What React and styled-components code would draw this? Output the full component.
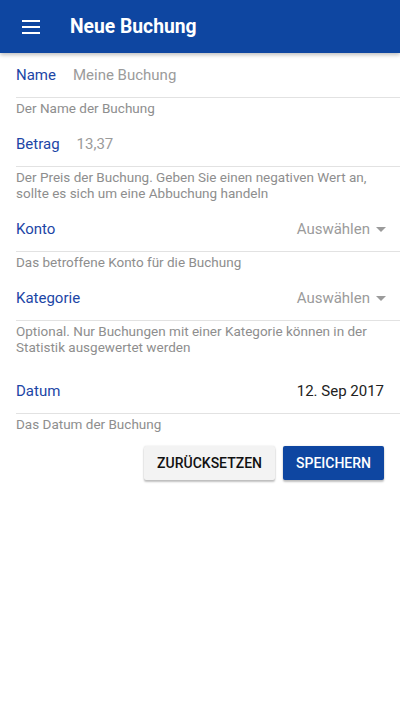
import styled, { createGlobalStyle } from 'styled-components';

const GlobalStyle = createGlobalStyle`
  body {
    margin: 0;
    background: #fff;
    font-family: Roboto, "Noto Sans", sans-serif;
  }
`;

const Page = styled.div`
  width: 400px;
  min-height: 711px;
  background: #fff;
`;

const Toolbar = styled.header`
  height: 53px;
  background: #0e46a1;
  display: flex;
  align-items: center;
  padding-left: 22px;
  box-shadow: 0 2px 4px rgba(0, 0, 0, 0.25);
  position: relative;
  z-index: 1;
`;

const Menu = styled.div`
  width: 18px;
  display: flex;
  flex-direction: column;
  gap: 4px;
  span {
    height: 2px;
    background: #fff;
  }
`;

const Title = styled.h1`
  margin: 0 0 0 30px;
  color: #fff;
  font-size: 19.3px;
  font-weight: 700;
`;

const Form = styled.div`
  padding-left: 16px;
`;

const Field = styled.div`
  margin-top: ${(p) => p.$gap || 0}px;
`;

const Row = styled.div`
  height: 44px;
  display: flex;
  align-items: center;
  border-bottom: 1px solid #e2e2e2;
  padding-right: 16px;
`;

const Label = styled.span`
  color: #1c46a6;
  font-size: 15px;
`;

const Value = styled.span`
  font-size: 15px;
  color: ${(p) => (p.$dark ? '#222' : '#9b9b9b')};
  margin-left: ${(p) => (p.$right ? 'auto' : '17px')};
  display: flex;
  align-items: center;
`;

const Caret = styled.span`
  margin-left: 6px;
  margin-right: -2px;
  width: 0;
  height: 0;
  border-left: 5px solid transparent;
  border-right: 5px solid transparent;
  border-top: 5px solid #9b9b9b;
`;

const Hint = styled.div`
  font-size: 13.5px;
  line-height: 16px;
  color: #8e8e8e;
  padding-top: 2px;
  padding-right: 16px;
`;

const Actions = styled.div`
  display: flex;
  justify-content: flex-end;
  gap: 8px;
  padding: 14px 16px 0 0;
`;

const Button = styled.button`
  height: 34px;
  border: none;
  border-radius: 2px;
  padding: 0 13px;
  font-family: Roboto, sans-serif;
  font-size: 14px;
  font-weight: 500;
  text-transform: uppercase;
  background: ${(p) => (p.$primary ? '#0e46a1' : '#f3f3f3')};
  color: ${(p) => (p.$primary ? '#fff' : '#111')};
  box-shadow: 0 2px 2px rgba(0, 0, 0, 0.24), 0 0 2px rgba(0, 0, 0, 0.12);
`;

const fields = [
  { label: 'Name', value: 'Meine Buchung', hint: 'Der Name der Buchung', gap: 0 },
  {
    label: 'Betrag',
    value: '13,37',
    hint: 'Der Preis der Buchung. Geben Sie einen negativen Wert an, sollte es sich um eine Abbuchung handeln',
    gap: 6,
  },
  { label: 'Konto', select: true, hint: 'Das betroffene Konto für die Buchung', gap: 6 },
  {
    label: 'Kategorie',
    select: true,
    hint: 'Optional. Nur Buchungen mit einer Kategorie können in der Statistik ausgewertet werden',
    gap: 6,
  },
];

const App = () => {
  return (
    <Page>
      <GlobalStyle />
      <Toolbar>
        <Menu>
          <span />
          <span />
          <span />
        </Menu>
        <Title>Neue Buchung</Title>
      </Toolbar>
      <Form>
        {fields.map((f) => (
          <Field key={f.label} $gap={f.gap}>
            <Row>
              <Label>{f.label}</Label>
              {f.select ? (
                <Value $right>
                  Auswählen
                  <Caret />
                </Value>
              ) : (
                <Value>{f.value}</Value>
              )}
            </Row>
            <Hint>{f.hint}</Hint>
          </Field>
        ))}
        <Field $gap={14}>
          <Row>
            <Label>Datum</Label>
            <Value $right $dark>
              12. Sep 2017
            </Value>
          </Row>
          <Hint>Das Datum der Buchung</Hint>
        </Field>
        <Actions>
          <Button>Zurücksetzen</Button>
          <Button $primary>Speichern</Button>
        </Actions>
      </Form>
    </Page>
  );
};

export default App;
